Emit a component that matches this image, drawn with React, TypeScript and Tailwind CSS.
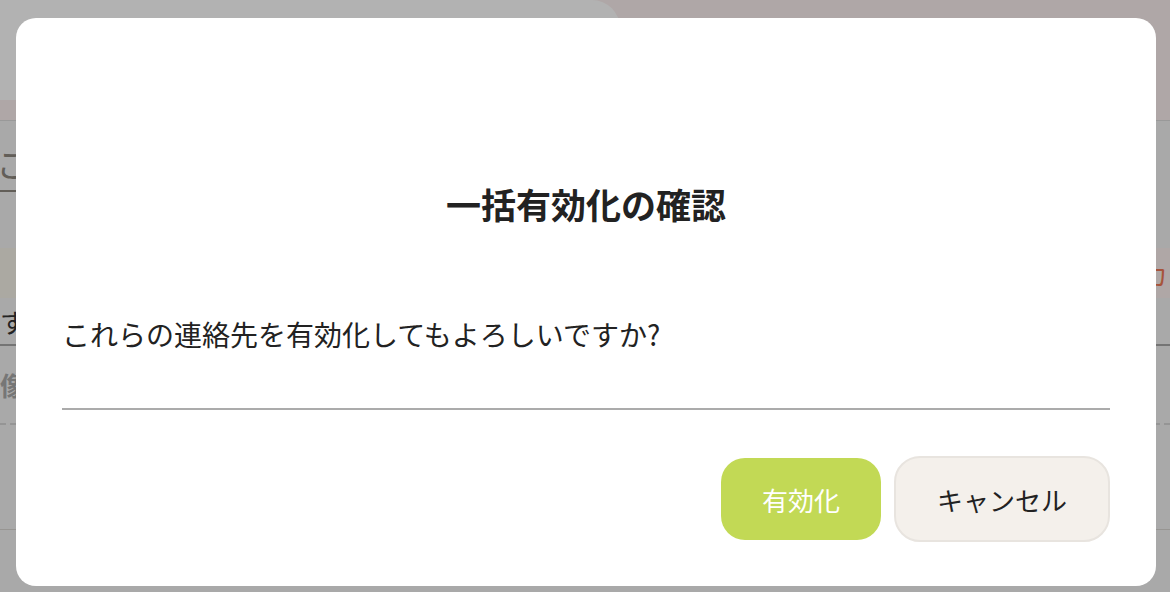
// 一括有効化の確認ダイアログ — 背景の一覧画面の上にオーバーレイとモーダル

const FONT = "font-['Noto_Sans_CJK_JP','Noto_Sans',sans-serif]";

function BackgroundPage() {
  return (
    <div className="flex h-[592px] w-[1170px] flex-col bg-[#f3f3f3]">
      {/* ヘッダー */}
      <div className="h-[121px] border-b border-[#dcdcdc] bg-[#fbf0ef]">
        <div className="h-[100px] w-[620px] rounded-tr-[28px] bg-white" />
      </div>

      {/* タイトル行 */}
      <div className="h-[127px] pt-[24px]">
        <span className="-ml-[4px] border-b-2 border-[#8d877e] pb-[2px] text-[34px] leading-[38px] text-[#8d877e]">
          こ
        </span>
      </div>

      {/* テーブルヘッダー */}
      <div className="flex h-[50px]">
        <div className="w-[600px] bg-[#f5f2e9]" />
        <div className="flex flex-1 items-center justify-end bg-[#fbefee] pr-[2px] text-[26px] text-[#f07753]">
          カ
        </div>
      </div>

      {/* 行 */}
      <div className="flex h-[48px] items-center border-b-2 border-[#a6a6a6] text-[26px] text-[#333]">
        す
      </div>
      <div className="flex h-[79px] items-center border-b-2 border-dashed border-[#d6d6d6] text-[26px] font-bold text-[#aaa]">
        像
      </div>
      <div className="h-[105px] border-b border-[#d9d6d2]" />
    </div>
  );
}

function ConfirmDialog() {
  return (
    <div className="flex h-[568px] w-[1140px] flex-col rounded-[20px] bg-white px-[46px]">
      <h2 className="pt-[166px] text-center text-[35px] font-bold leading-[40px] text-[#222]">
        一括有効化の確認
      </h2>
      <p className="mt-[90px] text-[28px] leading-[40px] text-[#222]">
        これらの連絡先を有効化してもよろしいですか?
      </p>
      <div className="mt-[54px] h-[2px] bg-[#ababab]" />
      <div className="mt-[46px] flex items-center justify-end gap-[13px]">
        <button className="h-[82px] w-[160px] rounded-[24px] bg-[#c2d955] text-[26px] text-white">
          有効化
        </button>
        <button className="h-[86px] w-[216px] rounded-[26px] border-2 border-[#e8e4df] bg-[#f4f0eb] text-[26px] text-[#222]">
          キャンセル
        </button>
      </div>
    </div>
  );
}

export default function App() {
  return (
    <div className={`relative h-[592px] w-[1170px] overflow-hidden ${FONT}`}>
      <BackgroundPage />
      <div className="absolute inset-0 bg-black/30 pl-[16px] pt-[18px]">
        <ConfirmDialog />
      </div>
    </div>
  );
}
